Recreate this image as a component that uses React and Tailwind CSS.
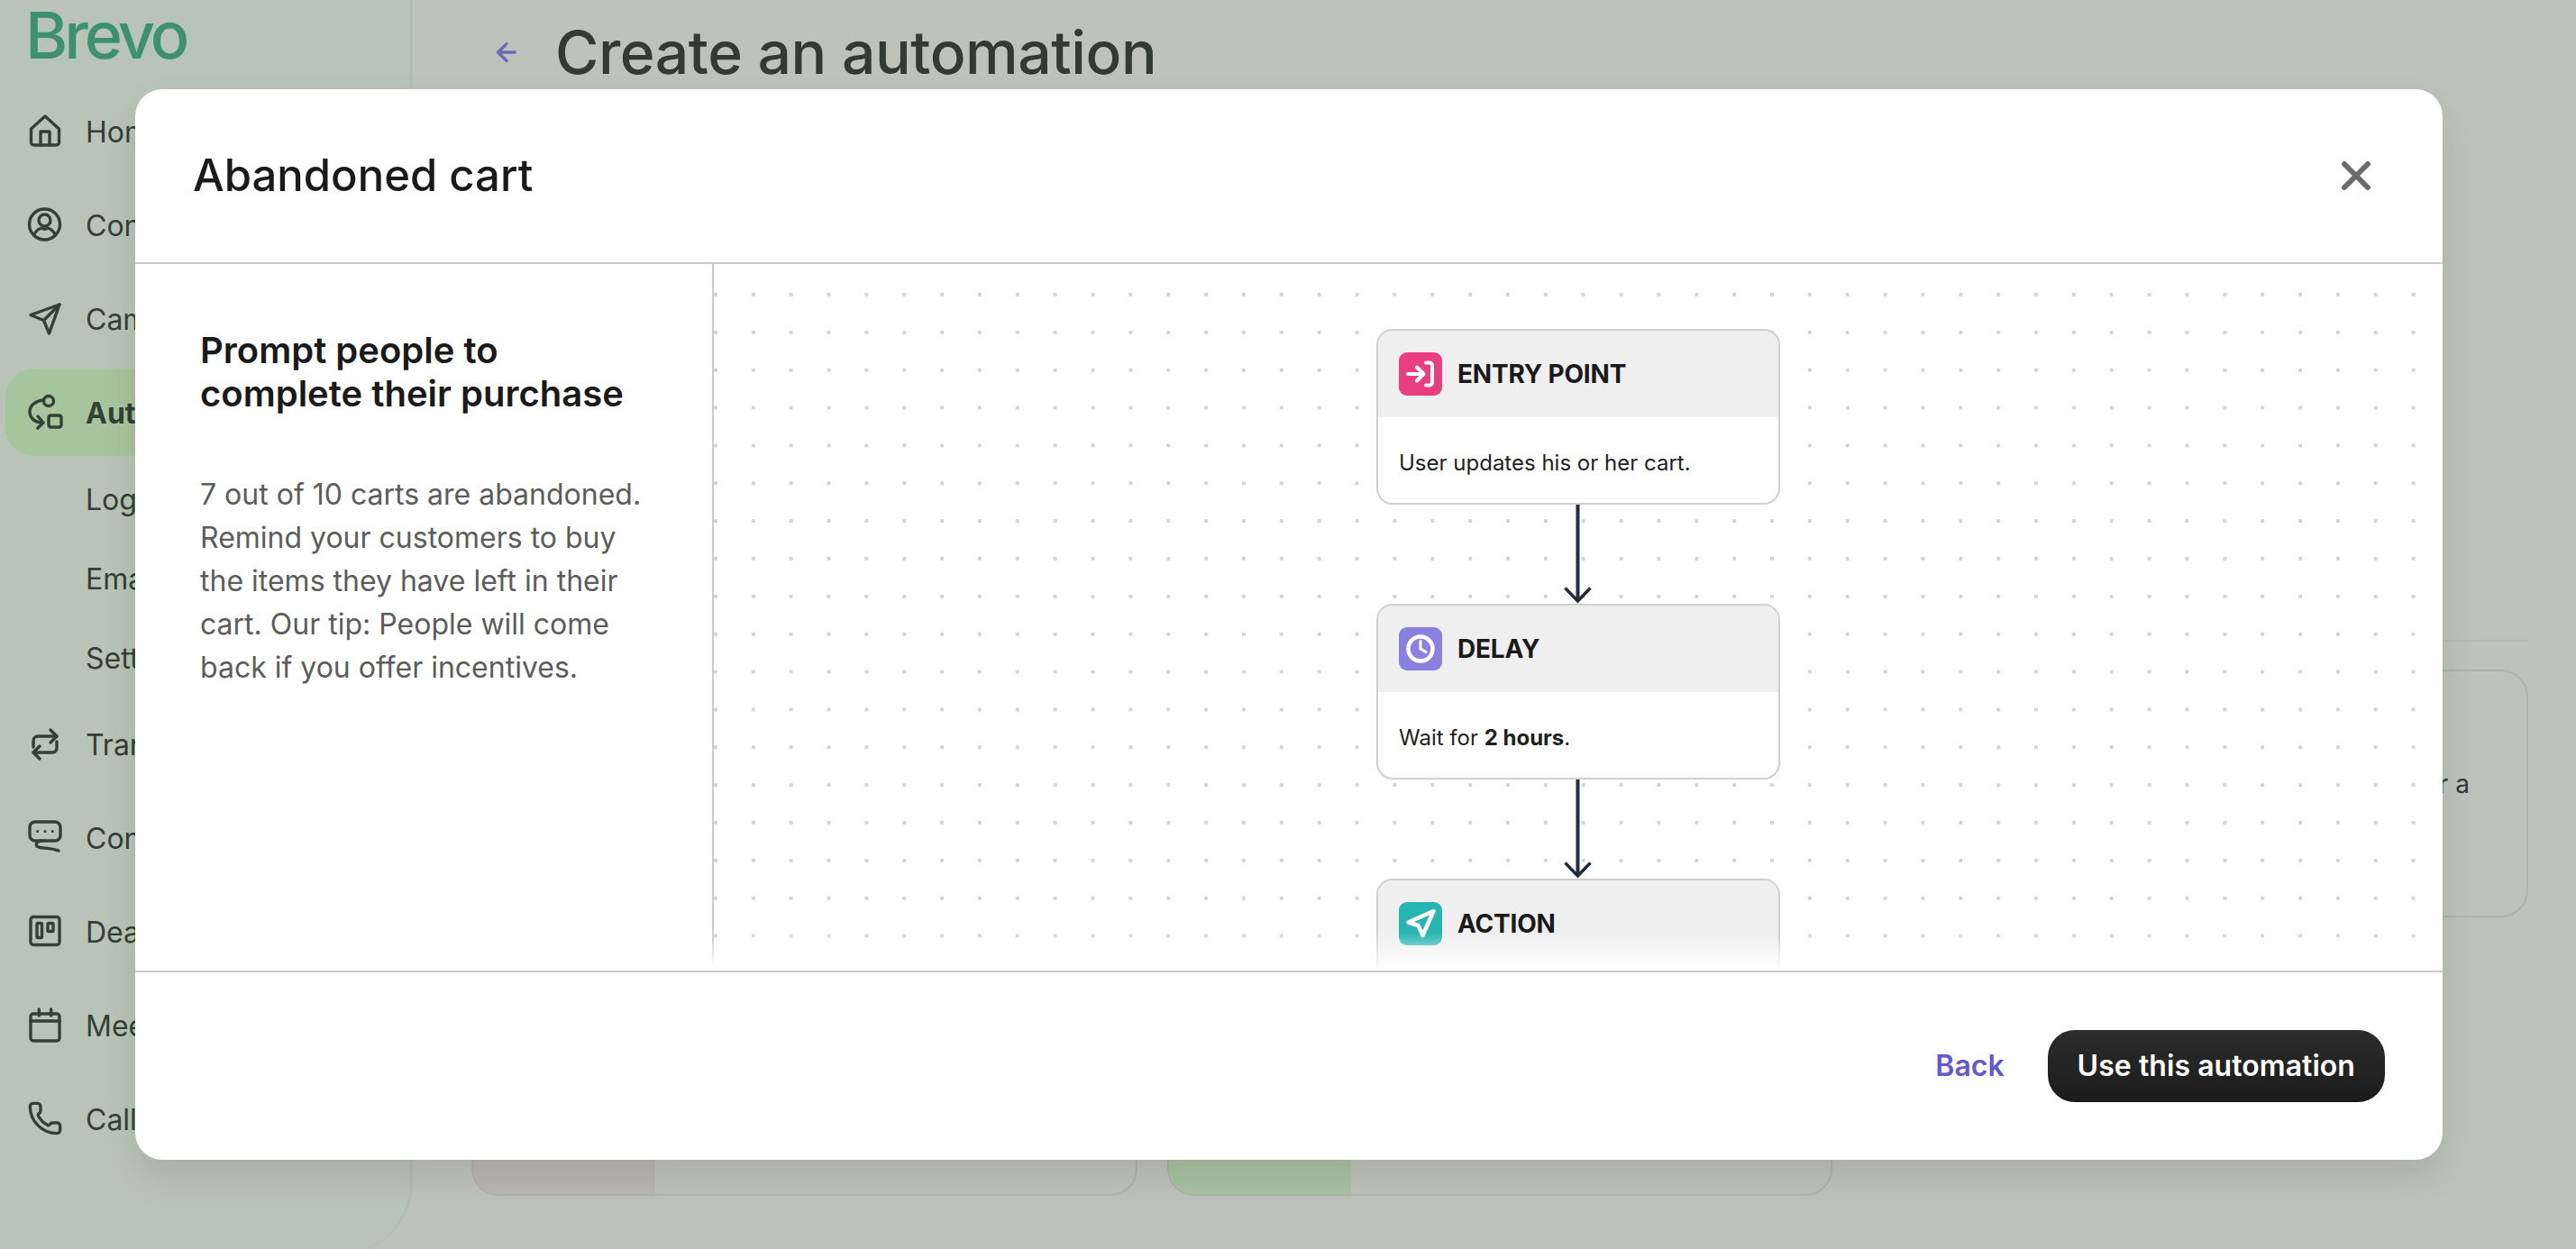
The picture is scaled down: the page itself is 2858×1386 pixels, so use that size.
import { ArrowLeft, Phone } from 'lucide-react';

const Icon = ({ children }) => (
    <svg viewBox="0 0 40 40" className="w-10 h-10 shrink-0" fill="none" stroke="currentColor" strokeWidth="3.4" strokeLinecap="round" strokeLinejoin="round">
        {children}
    </svg>
);

const HomeIcon = () => (
    <Icon>
        <path d="M4.5 18 20 4l15.5 14v15a3 3 0 0 1-3 3h-25a3 3 0 0 1-3-3Z" />
        <path d="M15 36V21h10v15" />
    </Icon>
);
const ContactsIcon = () => (
    <Icon>
        <circle cx="19.5" cy="20" r="17" />
        <circle cx="19.5" cy="15.5" r="6.5" />
        <path d="M8 31c2-4 5-6 8-7 2 1.500 5 1.500 7 0 3 1 6 3 8 7" />
    </Icon>
);
const CampaignsIcon = () => (
    <Icon>
        <path d="M36 5 4 16.500l14.500 6L24.500 37Z" />
        <path d="M36 5 18.500 22.500" />
    </Icon>
);
const AutomationsIcon = () => (
    <Icon>
        <circle cx="24" cy="8" r="5.500" />
        <rect x="24" y="24" width="14" height="13" rx="2.500" />
        <path d="M18 7C9 8 3 13 3 20s6 12 14 12" />
        <path d="m12 25 6 7-6 6" />
    </Icon>
);
const TransactionalIcon = () => (
    <Icon>
        <path d="M7 24v-7a5 5 0 0 1 5-5h21" />
        <path d="m26 5 7 7-7 7" />
        <path d="M33 18v7a5 5 0 0 1-5 5H7" />
        <path d="m14 23-7 7 7 7" />
    </Icon>
);
const ConversationsIcon = () => (
    <Icon>
        <rect x="3" y="3" width="34" height="21" rx="6" />
        <path d="M17 24c-5 0-8 3-6 6 2 3 14 1 24 5" />
        <circle cx="11.700" cy="13.500" r="1.500" fill="currentColor" stroke="none" />
        <circle cx="20" cy="13.500" r="1.500" fill="currentColor" stroke="none" />
        <circle cx="28.300" cy="13.500" r="1.500" fill="currentColor" stroke="none" />
    </Icon>
);
const DealsIcon = () => (
    <Icon>
        <rect x="4" y="4.500" width="32" height="31" rx="3" />
        <rect x="11" y="11.500" width="5.500" height="16" rx="1" />
        <rect x="23" y="11.500" width="6" height="9" rx="1" />
    </Icon>
);
const MeetingsIcon = () => (
    <Icon>
        <rect x="4" y="8" width="32" height="30" rx="3" />
        <path d="M4 16h32M13.300 3v7M26.700 3v7" />
    </Icon>
);

const NavItem = ({ icon, label, active }) => (
    <div className={active
        ? 'flex items-center gap-[25px] h-[97px] my-[3.5px] ml-[6px] pl-[24px] bg-[#a7c59c] rounded-l-[32px] font-bold'
        : 'flex items-center gap-[25px] h-[104px] pl-[30px]'}>
        {icon}
        <span className="pt-[3px]">{label}</span>
    </div>
);

const SubItem = ({ label }) => (
    <div className="flex items-center h-[88px] pl-[95px] pt-[4px]">{label}</div>
);

const BgCard = ({ strip, children }) => (
    <div className="h-[275px] border-2 border-[#adb3a9] rounded-[30px] overflow-hidden flex">
        {strip && <div className={`w-[202px] ${strip}`} />}
        {children}
    </div>
);

const EntryGlyph = () => (
    <svg viewBox="0 0 48 48" className="w-12 h-12" fill="none" stroke="white" strokeWidth="4" strokeLinecap="round" strokeLinejoin="round">
        <path d="M10 24h17M20 16.500l7.500 7.500-7.500 7.500" />
        <path d="M30 11.500h4a3 3 0 0 1 3 3v19a3 3 0 0 1-3 3h-4" />
    </svg>
);
const DelayGlyph = () => (
    <svg viewBox="0 0 48 48" className="w-12 h-12" fill="none" stroke="white" strokeLinecap="round" strokeLinejoin="round">
        <circle cx="24" cy="24" r="13.500" strokeWidth="4.5" />
        <path d="M24 15.500V24l6 3.500" strokeWidth="3" />
    </svg>
);
const ActionGlyph = () => (
    <svg viewBox="0 0 48 48" className="w-12 h-12" fill="none" stroke="white" strokeWidth="4.5" strokeLinecap="round" strokeLinejoin="round">
        <path d="M38.500 10 10.500 22.500 21.500 26l5 11Z" />
    </svg>
);

const FlowCard = ({ color, glyph, title, children }) => (
    <div className="w-[448px] shrink-0 h-[195px] bg-white border-2 border-[#cfcfcf] rounded-[18px] overflow-hidden">
        <div className="h-[96px] bg-[#efefef] flex items-center gap-[17px] pl-[23px]">
            <div className={`w-12 h-12 rounded-[9px] ${color}`}>{glyph}</div>
            <span className="text-[28px] font-bold text-[#1a1a1a] tracking-[-0.2px]">{title}</span>
        </div>
        <div className="h-[95px] flex items-center pl-[23px] pt-[7px] text-[24px] text-[#1f1f1f]">{children}</div>
    </div>
);

const FlowArrow = () => (
    <svg viewBox="0 0 40 110" className="w-10 h-[110px] shrink-0" fill="none" stroke="#1f2d3d">
        <path d="M19.500 0v107" strokeWidth="4" />
        <path d="m5.500 92.500 14 14.500 14-14.500" strokeWidth="3.500" />
    </svg>
);

const App = () => {
    return (
        <div className="relative w-screen h-screen overflow-hidden flex items-start bg-[#bdc2ba] text-[#344037] font-[Inter,sans-serif]">
            {/* page behind the dialog */}
            <aside className="w-[458px] h-[1392px] shrink-0 bg-[#b9c4b8] border-r-[3px] border-[#aebfb1] rounded-br-[80px] text-[32px]">
                <div className="h-[93px] pl-[28px] pt-[1px] text-[72px] leading-[76px] font-medium tracking-[-4px] text-[#3d9170]">Brevo</div>
                <NavItem icon={<HomeIcon />} label="Home" />
                <NavItem icon={<ContactsIcon />} label="Contacts" />
                <NavItem icon={<CampaignsIcon />} label="Campaigns" />
                <NavItem icon={<AutomationsIcon />} label="Automations" active />
                <SubItem label="Logs" />
                <SubItem label="Email settings" />
                <SubItem label="Settings" />
                <NavItem icon={<TransactionalIcon />} label="Transactional" />
                <NavItem icon={<ConversationsIcon />} label="Conversations" />
                <NavItem icon={<DealsIcon />} label="Deals" />
                <NavItem icon={<MeetingsIcon />} label="Meetings" />
                <NavItem icon={<Phone size={40} strokeWidth={2} />} label="Calls" />
            </aside>

            <main className="flex-1 pl-[65px] pr-[53px]">
                <div className="h-[116px] flex items-center pl-[23px] gap-[38px]">
                    <ArrowLeft size={32} strokeWidth={2.5} className="text-[#6a68b8]" />
                    <h1 className="text-[66px] font-medium text-[#333a33] tracking-[-0.45px]">Create an automation</h1>
                </div>
                <div className="h-[594px]" />
                <div className="h-[2px] bg-[#b3b9af]" />
                <div className="grid grid-cols-3 gap-x-[33px] gap-y-[34px] mt-[31px]">
                    <BgCard />
                    <BgCard />
                    <BgCard>
                        <p className="w-full self-center text-right pr-[63px] pb-[22px] text-[28px] text-[#333a33]">Welcome them after a</p>
                    </BgCard>
                    <BgCard strip="bg-[#bab7b0]" />
                    <BgCard strip="bg-[#a9c2a2]" />
                </div>
            </main>

            {/* dialog */}
            <div className="absolute left-[150px] top-[99px] w-[2560px] h-[1188px] bg-white rounded-[30px] shadow-[0_20px_40px_rgba(0,0,0,0.1)] flex flex-col overflow-hidden">
                <div className="h-[194px] shrink-0 border-b-2 border-[#cccccc] flex items-center justify-between pl-[64px] pr-[78px]">
                    <h2 className="text-[49px] font-medium text-[#1a1a1a]">Abandoned cart</h2>
                    <svg viewBox="0 0 36 36" className="w-9 h-9" fill="none" stroke="#6b6b6b" strokeWidth="6" strokeLinecap="round">
                        <path d="M5 5l26 26M31 5 5 31" />
                    </svg>
                </div>

                <div className="relative flex-1 flex overflow-hidden">
                    <div className="w-[642px] shrink-0 border-r-2 border-[#cccccc] pl-[72px] pt-[72px]">
                        <h3 className="text-[40px] leading-[48px] font-semibold text-[#1a1a1a]">
                            Prompt people to<br />complete their purchase
                        </h3>
                        <p className="mt-[64px] w-[512px] text-[32px] leading-[48px] text-[#5c5c5c]">
                            7 out of 10 carts are abandoned. Remind your customers to buy the items they have left in their cart. Our tip: People will come back if you offer incentives.
                        </p>
                    </div>
                    <div className="flex-1 flex flex-col items-center pt-[72px] overflow-hidden bg-[radial-gradient(#cfd3da_2px,transparent_2.5px)] bg-[size:41.87px_41.87px] bg-[position:-19px_13px]">
                        <FlowCard color="bg-[#ea3f7f]" glyph={<EntryGlyph />} title="ENTRY POINT">User updates his or her cart.</FlowCard>
                        <FlowArrow />
                        <FlowCard color="bg-[#8a80e0]" glyph={<DelayGlyph />} title="DELAY">
                            <span>Wait for <b className="font-bold">2 hours</b>.</span>
                        </FlowCard>
                        <FlowArrow />
                        <FlowCard color="bg-[#26b5b1]" glyph={<ActionGlyph />} title="ACTION" />
                    </div>
                    <div className="absolute left-0 right-0 bottom-0 h-[42px] bg-gradient-to-b from-transparent to-white" />
                </div>

                <div className="h-[210px] shrink-0 border-t-2 border-[#cccccc] flex items-center justify-end gap-[48px] pr-[64px]">
                    <span className="text-[32px] font-semibold text-[#6258cf]">Back</span>
                    <button className="h-[80px] px-[33px] rounded-[30px] bg-gradient-to-b from-[#2c2c2c] to-[#1b1b1b] text-white text-[32px] font-semibold tracking-[0.05px]">
                        Use this automation
                    </button>
                </div>
            </div>
        </div>
    );
};

export default App;
